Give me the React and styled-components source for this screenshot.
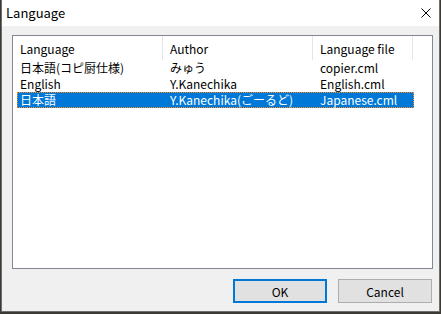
import styled, { createGlobalStyle } from "styled-components"

const GlobalStyle = createGlobalStyle`
    * { box-sizing: border-box; }
    html, body {
        margin: 0;
        padding: 0;
        background: #3b3a35;
        width: 441px;
        height: 314px;
        overflow: hidden;
    }
    body {
        font-family: "Noto Sans CJK JP", "Noto Sans", sans-serif;
        font-size: 12px;
        color: #000;
    }
`

const Window = styled.div`
    margin-left: 1px;
    width: 439px;
    height: 312px;
    border: 1px solid #6e6e6e;
    border-top: none;
    background: #f0f0f0;
    display: flex;
    flex-direction: column;
`

const TitleBar = styled.div`
    height: 26px;
    background: #fff;
    display: flex;
    align-items: center;
    justify-content: space-between;
    padding: 0 8px 0 4px;
`

const Title = styled.span`
    font-size: 13px;
    line-height: 26px;
`

const CloseIcon = () => (
    <svg width="10" height="10" viewBox="0 0 10 10">
        <path d="M0.5 0.5 L9.5 9.5 M9.5 0.5 L0.5 9.5" stroke="#000" strokeWidth="1" fill="none" />
    </svg>
)

const Body = styled.div`
    flex: 1;
    display: flex;
    flex-direction: column;
    padding: 9px 6px 0 10px;
`

const ListView = styled.div`
    height: 234px;
    border: 1px solid #828790;
    background: #fff;
    display: flex;
    flex-direction: column;
`

const Header = styled.div`
    display: flex;
    height: 24px;
`

const HeaderCell = styled.div`
    width: ${p => p.width}px;
    border-right: 1px solid #e5e5e5;
    padding-left: 7px;
    display: flex;
    align-items: center;
    white-space: nowrap;
`

const Row = styled.div`
    display: flex;
    align-items: center;
    margin-left: 4px;
    width: 397px;
    height: 16px;
    border: 1px ${p => (p.selected ? "dotted #ff8a1c" : "solid transparent")};
    background: ${p => (p.selected ? "#0078d7" : "transparent")};
    color: ${p => (p.selected ? "#fff" : "#000")};
`

const Cell = styled.div`
    width: ${p => p.width}px;
    padding-left: ${p => p.pad}px;
    line-height: 14px;
    white-space: nowrap;
`

const Buttons = styled.div`
    display: flex;
    justify-content: flex-end;
    gap: 11px;
    margin-top: 10px;
    padding-right: 1px;
`

const Button = styled.button`
    width: 94px;
    height: 24px;
    background: #e1e1e1;
    border: ${p => (p.primary ? "2px solid #0078d7" : "1px solid #adadad")};
    font-family: "Noto Sans CJK JP", "Noto Sans", sans-serif;
    font-size: 12px;
    color: #000;
    padding: 0;
`

const columns = [
    { title: "Language", width: 150 },
    { title: "Author", width: 150 },
    { title: "Language file", width: 100 },
]

const rows = [
    ["日本語(コピ厨仕様)", "みゅう", "copier.cml"],
    ["English", "Y.Kanechika", "English.cml"],
    ["日本語", "Y.Kanechika(ごーるど)", "Japanese.cml"],
]

const App = () => {
  return (
    <>
      <GlobalStyle />
      <Window>
        <TitleBar>
            <Title>Language</Title>
            <CloseIcon />
        </TitleBar>
        <Body>
            <ListView>
                <Header>
                    {columns.map(c => (
                        <HeaderCell key={c.title} width={c.width}>{c.title}</HeaderCell>
                    ))}
                </Header>
                {rows.map((r, i) => (
                    <Row key={i} selected={i === 2}>
                        <Cell width={145} pad={2}>{r[0]}</Cell>
                        <Cell width={150} pad={7}>{r[1]}</Cell>
                        <Cell width={100} pad={7}>{r[2]}</Cell>
                    </Row>
                ))}
            </ListView>
            <Buttons>
                <Button primary>OK</Button>
                <Button>Cancel</Button>
            </Buttons>
        </Body>
      </Window>
    </>
  )
}

export default App
